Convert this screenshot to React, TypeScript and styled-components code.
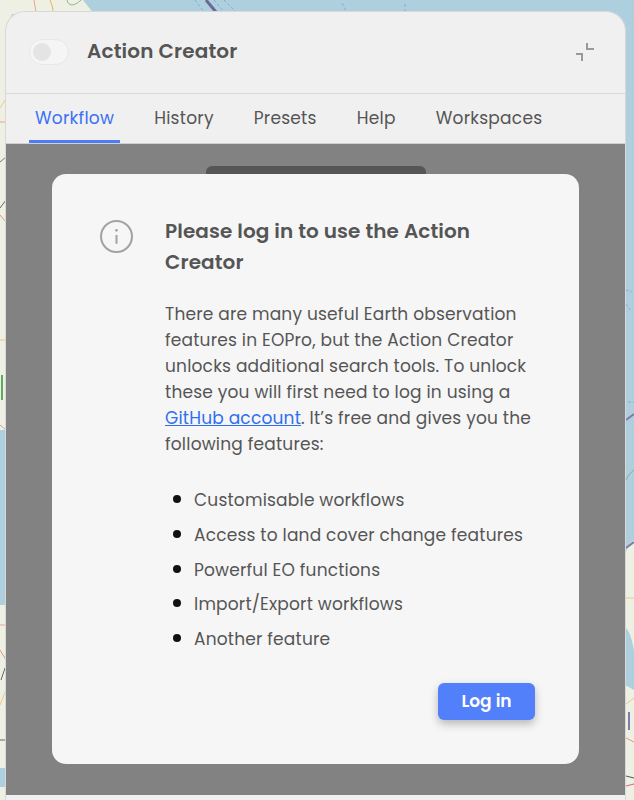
import React from "react"
import styled, { createGlobalStyle } from "styled-components"

const GlobalStyle = createGlobalStyle`
  html, body {
    margin: 0;
    padding: 0;
    height: 800px;
    overflow: hidden;
  }
  body {
    font-family: "Poppins", "Open Sans", "Noto Sans", sans-serif;
  }
`

const features = [
  "Customisable workflows",
  "Access to land cover change features",
  "Powerful EO functions",
  "Import/Export workflows",
  "Another feature",
]

const tabs = ["Workflow", "History", "Presets", "Help", "Workspaces"]

const MapBackdrop = () => (
  <MapSvg viewBox="0 0 634 800" preserveAspectRatio="none">
    <rect width="634" height="800" fill="#aed0de" />
    {/* land top left, left strip and bottom right */}
    <path d="M0 0 H83 L94 14 H12 L6 30 V430 H0 Z" fill="#eef0e4" />
    <path d="M0 605 H6 V768 H0 Z" fill="#eef0e4" />
    <path d="M0 787 H6 V800 H0 Z" fill="#eef0e4" />
    <path d="M634 540 C630 544 627 548 626 552 V800 H634 Z" fill="#eef0e4" />
    <path d="M626 628 C630 632 632 640 634 650 V690 C630 688 628 686 626 686 Z" fill="#aed0de" />
    {/* roads */}
    <g fill="none" strokeWidth="1">
      <path d="M34 0 L36 12" stroke="#e9a58e" />
      <path d="M50 0 C52 5 53 8 53 12" stroke="#e8b060" />
      <path d="M67 0 C68 6 74 7 81 0" stroke="#8fb98a" />
      <path d="M0 108 L5 100" stroke="#e8c890" />
      <path d="M0 122 H6" stroke="#e9a58e" />
      <path d="M0 162 L6 157" stroke="#7a7a7a" />
      <path d="M0 208 L6 200" stroke="#666" />
      <path d="M0 215 L6 222" stroke="#e9937e" />
      <path d="M0 340 H6" stroke="#eec48c" />
      <path d="M2 375 V400" stroke="#5fa85f" strokeWidth="2" />
      <path d="M0 425 L6 430" stroke="#c8a6a0" />
      <path d="M0 625 H6" stroke="#e9a58e" />
      <path d="M0 650 L6 660" stroke="#e9937e" />
      <path d="M1 680 L5 668" stroke="#666" />
      <path d="M0 705 L6 690" stroke="#eec48c" />
      <path d="M0 740 H6" stroke="#666" />
      <path d="M626 598 H634" stroke="#eec48c" />
      <path d="M626 704 L634 698" stroke="#eec48c" />
      <path d="M626 738 L634 742" stroke="#e9937e" />
      <path d="M626 776 L634 778" stroke="#555" />
      <path d="M626 786 L634 784" stroke="#d8607a" />
      <path d="M626 480 C628 475 631 472 634 470" stroke="#7fae90" />
    </g>
    <path d="M206 0 L216 12" stroke="#6c6a92" strokeWidth="3" fill="none" />
    <path d="M626 420 L634 414" stroke="#8478a8" strokeWidth="2" fill="none" />
    <path d="M626 548 L634 542" stroke="#8478a8" strokeWidth="2" fill="none" />
    <path d="M629 712 V730" stroke="#8478a8" strokeWidth="2" fill="none" />
    <g stroke="#8fa8e0" strokeWidth="1" strokeDasharray="3 2" fill="none">
      <path d="M195 0 L204 12" />
      <path d="M214 0 L224 12" />
      <path d="M224 0 L236 12" />
      <path d="M342 3 L346 11" />
      <path d="M405 4 V12" />
      <path d="M626 290 L632 292" />
      <path d="M626 304 L630 310" />
      <path d="M628 402 L634 402" />
    </g>
  </MapSvg>
)

const App = () => {
  return (
    <Page>
      <GlobalStyle />
      <MapBackdrop />
      <Panel>
        <Header>
          <Toggle>
            <Knob />
          </Toggle>
          <Title>Action Creator</Title>
          <Collapse viewBox="0 0 20 20">
            <path d="M12 1 V7 H19 M1 12 H7 V19" />
          </Collapse>
        </Header>
        <Tabs>
          {tabs.map((tab, i) => (
            <Tab key={tab} $active={i === 0}>
              {tab}
            </Tab>
          ))}
        </Tabs>
        <Content>
          <Peek />
          <Card>
            <InfoIcon viewBox="0 0 32 32">
              <circle cx="16" cy="16" r="15" />
              <path d="M16 14.5 V23" />
              <circle className="dot" cx="16" cy="10" r="1.3" />
            </InfoIcon>
            <CardBody>
              <Heading>Please log in to use the Action Creator</Heading>
              <Intro>
                There are many useful Earth observation features in EOPro, but
                the Action Creator unlocks additional search tools. To unlock
                these you will first need to log in using a{" "}
                <GitLink href="#">GitHub account</GitLink>. It’s free and gives
                you the following features:
              </Intro>
              <FeatureList>
                {features.map((item) => (
                  <li key={item}>{item}</li>
                ))}
              </FeatureList>
              <Actions>
                <LoginButton>Log in</LoginButton>
              </Actions>
            </CardBody>
          </Card>
        </Content>
      </Panel>
    </Page>
  )
}

const Page = styled.div`
  position: relative;
  width: 634px;
  height: 800px;
  overflow: hidden;
  padding: 11px 8px 0 5px;
  box-sizing: border-box;
`

const MapSvg = styled.svg`
  position: absolute;
  inset: 0;
  width: 634px;
  height: 800px;
`

const Panel = styled.div`
  position: relative;
  display: flex;
  flex-direction: column;
  height: 789px;
  background: #f0f0f0;
  border: 1px solid #d8d8d8;
  border-bottom: none;
  border-radius: 20px 20px 0 0;
  box-sizing: border-box;
  overflow: hidden;
`

const Header = styled.div`
  display: flex;
  align-items: center;
  height: 81px;
  padding: 0 30px 0 23px;
  border-bottom: 1px solid #d9d9d9;
  flex-shrink: 0;
`

const Toggle = styled.div`
  display: flex;
  align-items: center;
  width: 40px;
  height: 26px;
  padding-left: 3px;
  margin: -2px 18px 0 0;
  box-sizing: border-box;
  background: #f5f5f5;
  border: 1px solid #e8e8e8;
  border-radius: 13px;
`

const Knob = styled.div`
  width: 18px;
  height: 18px;
  border-radius: 50%;
  background: #e4e4e4;
`

const Title = styled.div`
  flex: 1;
  padding-bottom: 4px;
  font-size: 20px;
  letter-spacing: 0.15px;
  font-weight: 600;
  color: #555;
`

const Collapse = styled.svg`
  width: 20px;
  height: 20px;
  margin-top: -2px;
  fill: none;
  stroke: #9a9a9a;
  stroke-width: 2;
`

const Tabs = styled.div`
  display: flex;
  gap: 28px;
  height: 49px;
  padding: 0 0 0 23px;
  flex-shrink: 0;
  border-bottom: 1px solid #d0d0d0;
`

const Tab = styled.div<{ $active?: boolean }>`
  display: flex;
  align-items: center;
  padding: 2px 6px 0;
  font-size: 17px;
  letter-spacing: 0.25px;
  color: ${(p) => (p.$active ? "#3a72f5" : "#555")};
  border-bottom: 3px solid ${(p) => (p.$active ? "#4d7cf6" : "transparent")};
`

const Content = styled.div`
  position: relative;
  flex: 1;
  padding: 30px 46px 0;
  margin-bottom: 5px;
  background: #828282;
`

const Peek = styled.div`
  position: absolute;
  top: 22px;
  left: 200px;
  width: 220px;
  height: 12px;
  background: #565656;
  border-radius: 6px 6px 0 0;
`

const Card = styled.div`
  position: relative;
  display: flex;
  gap: 32px;
  height: 590px;
  padding: 42px 48px 0;
  box-sizing: border-box;
  background: #f6f6f6;
  border-radius: 14px;
`

const InfoIcon = styled.svg`
  flex-shrink: 0;
  width: 33px;
  height: 33px;
  margin-top: 4px;
  fill: none;
  stroke: #a3a3a3;
  stroke-width: 2;

  .dot {
    fill: #a3a3a3;
    stroke: none;
  }
`

const CardBody = styled.div`
  display: flex;
  flex-direction: column;
  flex: 1;
  margin-right: -8px;
`

const Heading = styled.h2`
  margin: 0 0 23px;
  padding-right: 8px;
  font-size: 20px;
  line-height: 31px;
  letter-spacing: 0.1px;
  font-weight: 600;
  color: #555;
`

const Intro = styled.p`
  margin: 0;
  font-size: 17px;
  line-height: 26px;
  letter-spacing: 0.2px;
  color: #555;
`

const GitLink = styled.a`
  color: #2f6ef0;
  text-decoration: underline;
`

const FeatureList = styled.ul`
  margin: 26px 0 0;
  padding: 0 0 0 29px;
  list-style: none;
  font-size: 17px;
  line-height: 34.8px;
  letter-spacing: 0.2px;
  color: #555;

  li::before {
    content: "";
    display: inline-block;
    width: 8px;
    height: 8px;
    margin: 0 13px 3px -21px;
    border-radius: 50%;
    background: #111;
  }
`

const Actions = styled.div`
  display: flex;
  justify-content: flex-end;
  margin: 26px 4px 0 0;
`

const LoginButton = styled.button`
  width: 97px;
  height: 37px;
  border: none;
  border-radius: 6px;
  background: #5280fa;
  color: #fff;
  font-family: inherit;
  font-size: 17px;
  font-weight: 600;
  box-shadow: 0 4px 8px rgba(0, 0, 0, 0.25);
`

export default App
